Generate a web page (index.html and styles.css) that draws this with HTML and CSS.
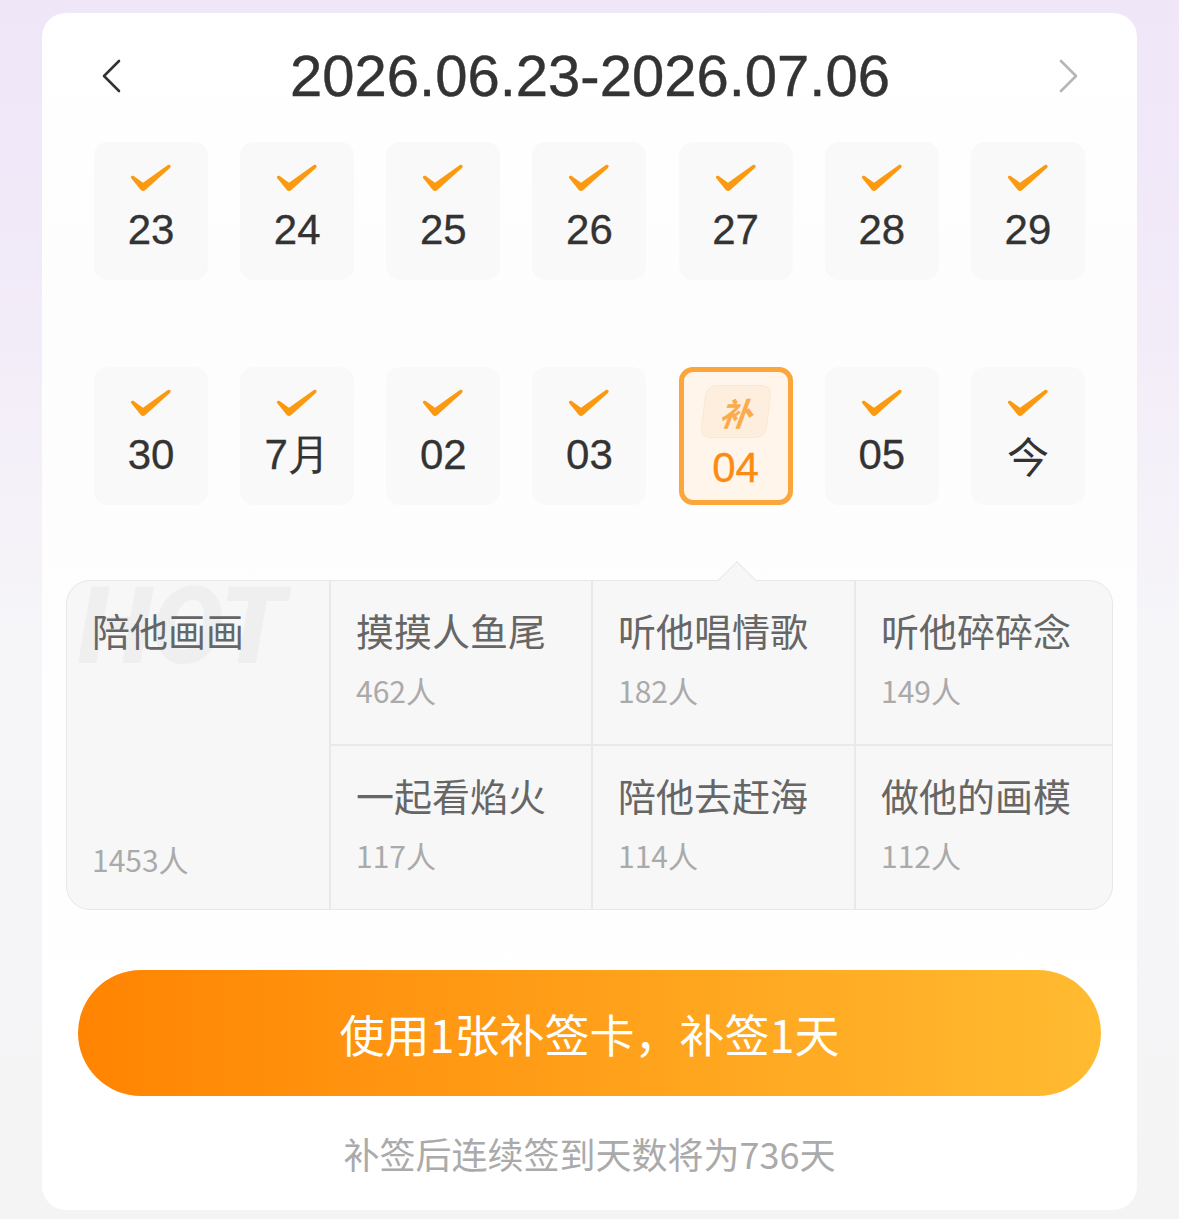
FILE: index.html
```html
<!DOCTYPE html>
<html lang="zh">
<head>
<meta charset="utf-8">
<title>补签</title>
<link rel="stylesheet" href="styles.css">
</head>
<body>
<main class="card">
  <header class="head">
    <svg class="chev" viewBox="0 0 20 34"><path d="M18 2 3 17l15 15" fill="none" stroke="#333" stroke-width="2.6" stroke-linecap="round" stroke-linejoin="round"/></svg>
    <h1 class="range">2026.06.23-2026.07.06</h1>
    <svg class="chev" viewBox="0 0 20 34"><path d="M2 2l15 15L2 32" fill="none" stroke="#b5b5b5" stroke-width="2.6" stroke-linecap="round" stroke-linejoin="round"/></svg>
  </header>
  <svg width="0" height="0" class="defs"><defs><path id="tick" d="M2.5 14.5c-1-.8-.8-1.900.2-2.500.6-.4 1.300-.4 2 .1l9.300 6.600L38.500 1.200c1-.8 2.300-.6 2.900.3.500.8.300 1.700-.5 2.400L16.300 26c-1.300 1.200-3 1.200-4.300.2z" fill="#fb9a10"/></defs></svg>
  <section class="days">
    <div class="day"><svg class="tick" viewBox="0 0 44 28"><use href="#tick"/></svg><span class="num">23</span></div>
    <div class="day"><svg class="tick" viewBox="0 0 44 28"><use href="#tick"/></svg><span class="num">24</span></div>
    <div class="day"><svg class="tick" viewBox="0 0 44 28"><use href="#tick"/></svg><span class="num">25</span></div>
    <div class="day"><svg class="tick" viewBox="0 0 44 28"><use href="#tick"/></svg><span class="num">26</span></div>
    <div class="day"><svg class="tick" viewBox="0 0 44 28"><use href="#tick"/></svg><span class="num">27</span></div>
    <div class="day"><svg class="tick" viewBox="0 0 44 28"><use href="#tick"/></svg><span class="num">28</span></div>
    <div class="day"><svg class="tick" viewBox="0 0 44 28"><use href="#tick"/></svg><span class="num">29</span></div>
    <div class="day"><svg class="tick" viewBox="0 0 44 28"><use href="#tick"/></svg><span class="num">30</span></div>
    <div class="day"><svg class="tick" viewBox="0 0 44 28"><use href="#tick"/></svg><span class="num">7月</span></div>
    <div class="day"><svg class="tick" viewBox="0 0 44 28"><use href="#tick"/></svg><span class="num">02</span></div>
    <div class="day"><svg class="tick" viewBox="0 0 44 28"><use href="#tick"/></svg><span class="num">03</span></div>
    <div class="day day-on"><span class="badge"><span class="badge-text">补</span></span><span class="num num-on">04</span></div>
    <div class="day"><svg class="tick" viewBox="0 0 44 28"><use href="#tick"/></svg><span class="num">05</span></div>
    <div class="day"><svg class="tick" viewBox="0 0 44 28"><use href="#tick"/></svg><span class="num num-cjk">今</span></div>
  </section>
  <section class="opts">
    <span class="notch"></span>
    <div class="opt opt-hot"><span class="hot">HOT</span><span class="name">陪他画画</span><span class="count">1453人</span></div>
    <div class="opt"><span class="name">摸摸人鱼尾</span><span class="count">462人</span></div>
    <div class="opt"><span class="name">听他唱情歌</span><span class="count">182人</span></div>
    <div class="opt"><span class="name">听他碎碎念</span><span class="count">149人</span></div>
    <div class="opt"><span class="name">一起看焰火</span><span class="count">117人</span></div>
    <div class="opt"><span class="name">陪他去赶海</span><span class="count">114人</span></div>
    <div class="opt"><span class="name">做他的画模</span><span class="count">112人</span></div>
  </section>
  <button class="cta">使用1张补签卡，补签1天</button>
  <p class="note">补签后连续签到天数将为736天</p>
</main>
</body>
</html>
```
FILE: styles.css
```css
* { box-sizing: border-box; }
html, body { margin: 0; height: 1219px; overflow: hidden; }
body {
  padding: 13px 42px 9px;
  background: linear-gradient(180deg, #efe6f8 0, #f2ebf8 300px, #f6f5f8 620px, #f5f4f5 100%);
  font-family: "Noto Sans CJK SC", "Noto Sans", sans-serif;
}
.card {
  height: 1197px;
  border-radius: 24px;
  background: linear-gradient(180deg, #fff 0, #fdfdfd 300px, #fff 100%);
  overflow: hidden;
}
.head {
  height: 129px;
  padding: 0 58px 3px 59px;
  display: flex;
  align-items: center;
  justify-content: space-between;
}
.chev { width: 20px; height: 34px; }
.range {
  margin: 0;
  font: 400 58px/1 "Liberation Sans Narrow", "Liberation Sans", sans-serif;
  color: #333;
  -webkit-text-stroke: .4px #333;
}
.defs { position: absolute; }
.days {
  margin: 0 52px;
  display: grid;
  grid-template-columns: repeat(7, 114px);
  justify-content: space-between;
  row-gap: 87px;
}
.day {
  height: 138px;
  border-radius: 14px;
  background: #f9f9f9;
  display: flex;
  flex-direction: column;
  align-items: center;
  padding-top: 22px;
}
.tick { width: 44px; height: 28px; }
.num {
  margin-top: 14px;
  font: 400 42px/48px "Liberation Sans Narrow", "Liberation Sans", sans-serif;
  color: #333;
  -webkit-text-stroke: .3px #333;
}
.num-cjk { font-family: "Noto Sans CJK SC", sans-serif; -webkit-text-stroke: 0; }
.day-on {
  background: #fff5ea;
  border: 5px solid #fba53b;
  padding-top: 13px;
}
.num-on { margin-top: 6px; color: #fb8b13; -webkit-text-stroke-color: #fb8b13; }
.badge {
  width: 66px;
  height: 53px;
  border-radius: 10px;
  background: #fdeedd;
  border: 1px solid #fbe8d2;
  transform: skewX(-7deg);
  display: flex;
  align-items: center;
  justify-content: center;
}
.badge-text {
  font-size: 32px;
  line-height: 1;
  font-weight: 700;
  font-style: italic;
  color: #f9ab4e;
}
.opts {
  position: relative;
  margin: 75px 24px 0;
  height: 330px;
  border: 1px solid #e8e8e8;
  border-radius: 24px;
  display: grid;
  grid-template-columns: 262px 260px 261px 1fr;
  grid-template-rows: 1fr 1fr;
  gap: 2px;
  background: #e9e9e9;
}
.notch {
  position: absolute;
  left: 653px;
  top: -13px;
  width: 34px;
  height: 34px;
  transform: rotate(45deg);
  background: #f7f7f7;
  border-left: 1px solid #e8e8e8;
  border-top: 1px solid #e8e8e8;
}
.opt {
  position: relative;
  overflow: hidden;
  background: #f7f7f7;
  padding: 20px 25px 0;
  display: flex;
  flex-direction: column;
}
.opt:nth-of-type(1) { }
.opt-hot { grid-row: span 2; border-radius: 23px 0 0 23px; justify-content: space-between; padding-bottom: 28px; }
.opt:nth-child(4) { border-radius: 0; }
.opt:nth-child(5) { border-radius: 0 23px 0 0; }
.opt:nth-child(8) { border-radius: 0 0 23px 0; }
.hot {
  position: absolute;
  left: 11px;
  top: -9px;
  font: italic 900 108px/1 Roboto, sans-serif;
  color: #efefef;
}
.name {
  position: relative;
  font-size: 38px;
  line-height: 58px;
  color: #666;
}
.count {
  position: relative;
  margin-top: 9px;
  font-size: 30px;
  line-height: 44px;
  color: #aaa;
}
.cta {
  display: block;
  width: 1023px;
  height: 126px;
  margin: 60px 36px 0;
  border: 0;
  border-radius: 63px;
  background: linear-gradient(90deg, #ff8402 0, #ffbb31 100%);
  color: #fff;
  font: 400 45px/1 "Noto Sans CJK SC", sans-serif;
}
.note {
  margin: 32px 0 0;
  text-align: center;
  font-size: 36px;
  line-height: 50px;
  color: #aaa;
}
```
